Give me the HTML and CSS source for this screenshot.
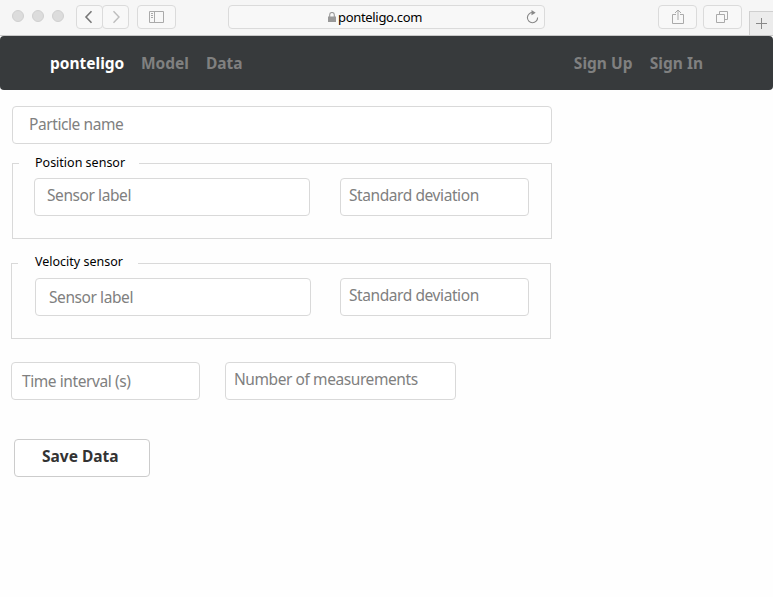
FILE: index.html
```html
<!DOCTYPE html>
<html lang="en">
<head>
<meta charset="utf-8">
<title>ponteligo</title>
<link rel="stylesheet" href="styles.css">
</head>
<body>
<div class="window">
  <header class="toolbar">
    <div class="lights"><i></i><i></i><i></i></div>
    <div class="history">
      <button class="tool back" aria-label="Back"><svg width="25" height="22" viewBox="0 0 25 22"><path d="M14.5 5.2 9 11l5.500 5.800" fill="none" stroke="#777" stroke-width="1.6"/></svg></button>
      <button class="tool forward" aria-label="Forward"><svg width="25" height="22" viewBox="0 0 25 22"><path d="M10.500 5.200 16 11l-5.500 5.800" fill="none" stroke="#bdbdbd" stroke-width="1.4"/></svg></button>
    </div>
    <button class="tool sidebar" aria-label="Sidebar"><svg width="15" height="12" viewBox="0 0 15 12"><path d="M.5.5h14v11H.5zM5.500.5v11M2 2.500h2M2 4.500h2M2 6.500h2" fill="none" stroke="#aaa"/></svg></button>
    <div class="address">
      <svg class="lock" width="8" height="10" viewBox="0 0 8 10"><path d="M1.700 5V2.800a2.300 2.300 0 0 1 4.600 0V5" fill="none" stroke="#999" stroke-width="1.100"/><path d="M0 4.500h8V10H0z" fill="#999"/></svg>
      <span class="url">ponteligo.com</span>
      <svg class="reload" width="13" height="14" viewBox="0 0 13 14"><path d="M7 2.600A5.100 5.100 0 1 0 11.600 7.500" fill="none" stroke="#888" stroke-width="1.100"/><path d="M5.500 0 9.700 2.700 5.500 5.300z" fill="#888"/></svg>
    </div>
    <button class="tool share" aria-label="Share"><svg width="12" height="16" viewBox="0 0 12 16"><path d="M4 5.500H.5v9h11v-9H8M6 11V1M3 4l3-3 3 3" fill="none" stroke="#aaa"/></svg></button>
    <button class="tool tabs" aria-label="Tabs"><svg width="13" height="13" viewBox="0 0 13 13"><path d="M.5 3.500h8v8h-8zM3.500 3.500v-3h8v8h-3" fill="none" stroke="#aaa"/></svg></button>
    <button class="newtab" aria-label="New tab"><svg width="11" height="11" viewBox="0 0 11 11"><path d="M5.500 0v11M0 5.500h11" stroke="#888"/></svg></button>
  </header>
  <nav class="navbar">
    <a class="brand">ponteligo</a>
    <a class="model">Model</a>
    <a class="data">Data</a>
    <a class="signup">Sign Up</a>
    <a class="signin">Sign In</a>
  </nav>
  <main class="form">
    <div class="field particle"><span>Particle name</span></div>
    <section class="group position">
      <h2 class="legend">Position sensor</h2>
      <div class="row">
        <div class="field label"><span>Sensor label</span></div>
        <div class="field deviation"><span>Standard deviation</span></div>
      </div>
    </section>
    <section class="group velocity">
      <h2 class="legend">Velocity sensor</h2>
      <div class="row">
        <div class="field label"><span>Sensor label</span></div>
        <div class="field deviation"><span>Standard deviation</span></div>
      </div>
    </section>
    <div class="timing">
      <div class="field interval"><span>Time interval (s)</span></div>
      <div class="field count"><span>Number of measurements</span></div>
    </div>
    <button class="save">Save Data</button>
  </main>
</div>
</body>
</html>
```
FILE: styles.css
```css
* { box-sizing: border-box; }
body { margin: 0; background: #fff; font-family: "Noto Sans", "Open Sans", sans-serif; }
button { font: inherit; padding: 0; margin: 0; }
svg { display: block; flex: none; }
.window { width: 773px; height: 597px; background: #fefefe; }

.toolbar { display: flex; height: 36px; padding: 5px 0 0 12px; background: #f6f6f6; border-bottom: 1px solid #c8c8c8; }
.lights { display: flex; gap: 8px; padding-top: 5px; width: 64px; }
.lights i { width: 12px; height: 12px; border-radius: 50%; background: #dcdcdc; border: 1px solid #d0d0d0; }
.history { display: flex; }
.tool { display: flex; align-items: center; justify-content: center; height: 24px; background: #f8f8f8; border: 1px solid #dbdbdb; border-radius: 4px; }
.back { width: 27px; border-radius: 4px; }
.forward { width: 27px; margin-left: -1px; border-radius: 4px; }
.sidebar { width: 39px; margin-left: 8px; }
.address { display: flex; align-items: center; width: 317px; height: 24px; margin-left: 52px; padding: 0 5px 0 99px; background: #f8f8f8; border: 1px solid #dbdbdb; border-radius: 4px; }
.url { margin: 0 auto 0 2px; font-size: 13px; letter-spacing: -.32px; line-height: 18px; color: #000; }
.share { width: 39px; margin-left: 113px; }
.tabs { width: 39px; margin-left: 6px; }
.newtab { display: flex; align-items: center; justify-content: center; width: 24px; height: 24px; margin: 6px 0 0 7px; background: #ececec; border: solid #cfcfcf; border-width: 1px 0 0 1px; }

.navbar { display: flex; height: 54px; padding: 16px 70px 0 50px; background: #373a3c; border-radius: 4px; font-size: 15.5px; font-weight: 700; line-height: 22px; color: #808080; white-space: nowrap; }
.brand { color: #fff; width: 91px; }
.model { width: 65px; }
.data { width: 368px; }
.signup { width: 76px; }

.form { display: flex; flex-direction: column; align-items: flex-start; padding: 16px 0 0 11px; }
.field { height: 38px; padding: 6px 0 0 8px; border: 1px solid #d9d9d9; border-radius: 4px; background: #fff; font-size: 15.5px; letter-spacing: -.42px; line-height: 20px; color: #808080; white-space: nowrap; }
.field span { display: inline-block; }
.particle { width: 540px; margin-left: 1px; padding: 7px 0 0 16px; }
.group { width: 540px; height: 76px; border: 1px solid #d9d9d9; }
.position { margin: 19px 0 0 1px; }
.velocity { margin-top: 24px; }
.legend { width: 120px; height: 18px; margin: -11px 0 0 6px; padding-left: 16px; background: #fefefe; font-size: 12.5px; font-weight: 400; line-height: 18px; color: #000; white-space: nowrap; }
.position .legend { margin-top: -10px; }
.row { display: flex; gap: 30px; padding: 7px 0 0 21px; }
.position .row { padding-top: 6px; }
.velocity .legend { padding-left: 17px; }
.velocity .row { gap: 29px; padding-left: 23px; }
.label { width: 276px; padding-left: 12px; }
.velocity .label { padding: 8px 0 0 13px; }
.deviation { width: 189px; }
.timing { display: flex; gap: 25px; margin-top: 23px; }
.interval { width: 189px; padding: 8px 0 0 10px; }
.count { width: 231px; }
.save { display: flex; width: 136px; height: 38px; margin: 39px 0 0 3px; padding: 6px 0 0 27px; border: 1px solid #ccc; border-radius: 4px; background: #fff; font-size: 15.5px; font-weight: 700; line-height: 20px; color: #333; white-space: nowrap; }
```
